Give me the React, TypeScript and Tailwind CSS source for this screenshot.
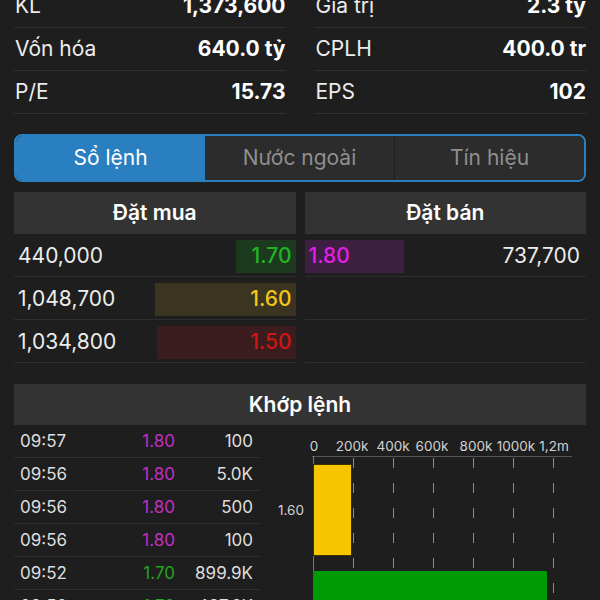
import React from 'react'

const font = { fontFamily: 'Inter, "Noto Sans", sans-serif' }

// ─── Data ────────────────────────────────────────────────────────────────────

const stats = [
  ['KL', '1,373,600', 'Giá trị', '2.3 tỷ'],
  ['Vốn hóa', '640.0 tỷ', 'CPLH', '400.0 tr'],
  ['P/E', '15.73', 'EPS', '102'],
]

const bids = [
  { vol: '440,000', price: '1.70', bar: 'w-[60px] bg-[#1c3a1e]', text: 'text-[#22b424]' },
  { vol: '1,048,700', price: '1.60', bar: 'w-[141px] bg-[#3a3421]', text: 'text-[#f5c518]' },
  { vol: '1,034,800', price: '1.50', bar: 'w-[139px] bg-[#3b1d1f]', text: 'text-[#d01414]' },
]

const trades = [
  { t: '09:57', p: '1.80', v: '100', up: true },
  { t: '09:56', p: '1.80', v: '5.0K', up: true },
  { t: '09:56', p: '1.80', v: '500', up: true },
  { t: '09:56', p: '1.80', v: '100', up: true },
  { t: '09:52', p: '1.70', v: '899.9K', up: false },
  { t: '09:50', p: '1.70', v: '437.6K', up: false },
]

const ticks = [53, 93, 133, 173, 213, 253, 293]
const tickLabels: [string, number][] = [
  ['0', 54], ['200k', 92], ['400k', 133], ['600k', 172],
  ['800k', 216], ['1000k', 256], ['1,2m', 294],
]

// ─── Chart ───────────────────────────────────────────────────────────────────

function VolumeChart() {
  return (
    <svg width="326" height="175" viewBox="0 0 326 175" className="block">
      {tickLabels.map(([l, x]) => (
        <text key={l} x={x} y={26} textAnchor="middle" fontSize="13.5" fill="#d2d2d2" style={font}>
          {l}
        </text>
      ))}
      <line x1="52" y1="31.5" x2="312" y2="31.5" stroke="#555" strokeWidth="1" />
      <line x1="53.5" y1="31" x2="53.5" y2="175" stroke="#777" strokeWidth="1" />
      {ticks.slice(1).map((x) => (
        <line key={x} x1={x + 0.5} y1="33" x2={x + 0.5} y2="175" stroke="#8a8a8a" strokeWidth="1" strokeDasharray="10 15" />
      ))}
      <rect x="53.5" y="39.5" width="38" height="91" fill="#f7c600" stroke="#3a3000" strokeWidth="1" />
      <text x="44" y="90" textAnchor="end" fontSize="13.5" fill="#d2d2d2" style={font}>1.60</text>
      <rect x="53" y="146" width="234" height="40" fill="#009a05" />
    </svg>
  )
}

// ─── App ─────────────────────────────────────────────────────────────────────

export default function App() {
  return (
    <div className="h-[600px] w-[600px] overflow-hidden bg-[#1e1e1e] text-white" style={font}>
      <div className="-mt-[15px] px-[14px]">
        {stats.map(([l1, v1, l2, v2]) => (
          <div key={l1} className="grid grid-cols-2 gap-[29px]">
            {[[l1, v1], [l2, v2]].map(([l, v]) => (
              <div key={l} className="flex h-[43px] items-center justify-between border-b border-[#303030] pl-[1px] text-[21px]">
                <span className="text-[#ececec]">{l}</span>
                <span className="font-bold">{v}</span>
              </div>
            ))}
          </div>
        ))}
      </div>

      {/* Tabs */}
      <div className="mx-[14px] mt-[20px] flex h-[48px] overflow-hidden rounded-[8px] border-2 border-[#2a7fc1] text-[21px]">
        <div className="flex w-[189px] items-center justify-center bg-[#2a7fc1] text-white">Sổ lệnh</div>
        <div className="flex flex-1 items-center justify-center border-r border-[#1e1e1e] bg-[#2c2c2c] text-[#8f8f8f]">Nước ngoài</div>
        <div className="flex flex-1 items-center justify-center bg-[#2c2c2c] text-[#8f8f8f]">Tín hiệu</div>
      </div>

      {/* Order book */}
      <div className="mx-[14px] mt-[10px] grid grid-cols-2 gap-[9px] text-[21px]">
        <div>
          <div className="flex h-[42px] items-center justify-center bg-[#333333] text-[21px] font-semibold">Đặt mua</div>
          {bids.map((b) => (
            <div key={b.price} className="flex h-[43px] items-center border-b border-[#2e2e2e] pt-[2px]">
              <span className="pl-[4px] text-[#ececec]">{b.vol}</span>
              <div className={`ml-auto flex h-[33px] items-center justify-end pr-[4px] font-medium ${b.bar} ${b.text}`}>
                {b.price}
              </div>
            </div>
          ))}
        </div>
        <div>
          <div className="flex h-[42px] items-center justify-center bg-[#333333] text-[21px] font-semibold">Đặt bán</div>
          <div className="flex h-[43px] items-center border-b border-[#2e2e2e] pt-[2px]">
            <div className="flex h-[33px] w-[99px] items-center bg-[#3d1f42] pl-[4px] font-medium text-[#e41ee4]">1.80</div>
            <span className="ml-auto pr-[6px] text-[#ececec]">737,700</span>
          </div>
          <div className="h-[43px] border-b border-[#2e2e2e]" />
          <div className="h-[43px] border-b border-[#2e2e2e]" />
        </div>
      </div>

      {/* Matched orders */}
      <div className="mx-[14px] mt-[21px]">
        <div className="flex h-[41px] items-center justify-center bg-[#333333] text-[21px] font-semibold">Khớp lệnh</div>
        <div className="flex">
          <div className="w-[246px] text-[17px]">
            {trades.map((r, i) => (
              <div key={i} className="grid h-[33px] grid-cols-[1fr_60px_78px] items-center border-b border-[#2e2e2e] pl-[6px] pr-[7px] pt-[2px]">
                <span className="text-[#dedede]">{r.t}</span>
                <span className={`text-right ${r.up ? 'text-[#c12fc4]' : 'text-[#22a31f]'}`}>{r.p}</span>
                <span className="text-right text-[#dedede]">{r.v}</span>
              </div>
            ))}
          </div>
          <VolumeChart />
        </div>
      </div>
    </div>
  )
}
